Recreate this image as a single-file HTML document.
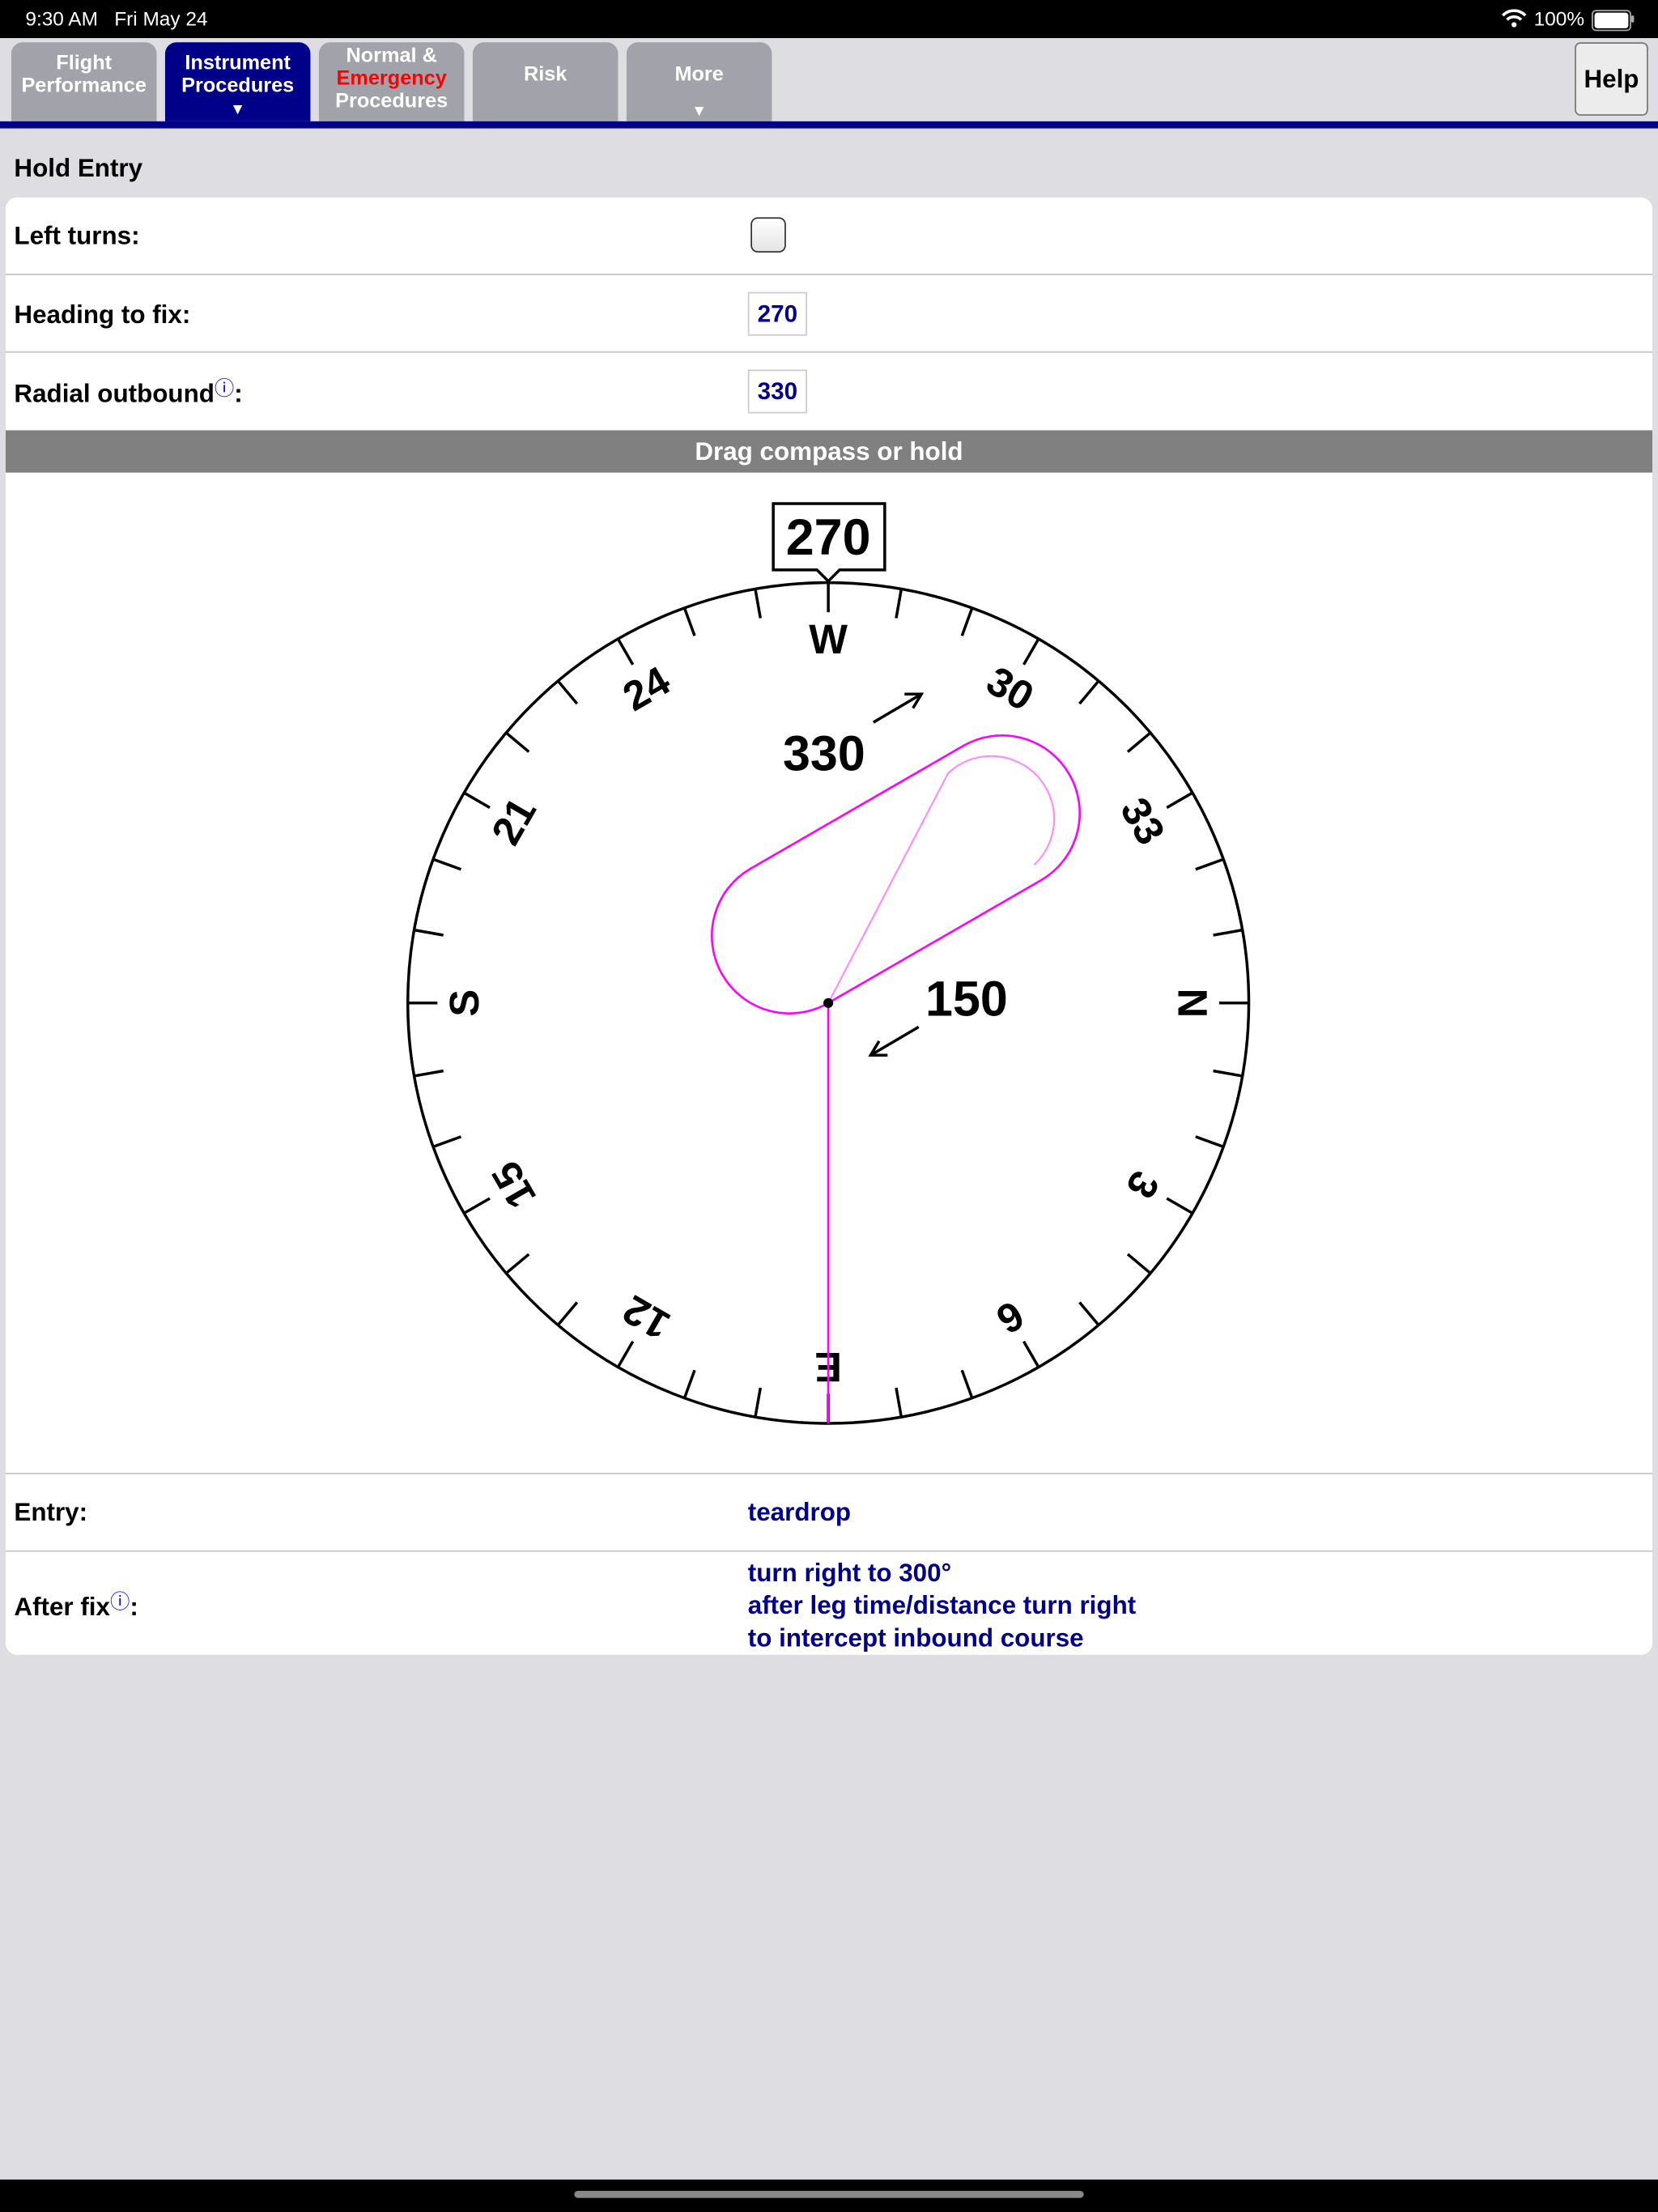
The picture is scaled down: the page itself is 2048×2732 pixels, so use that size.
<!DOCTYPE html>
<html><head><meta charset="utf-8"><style>
html,body{margin:0;padding:0;width:2048px;height:2732px;overflow:hidden;background:#dddde2;}
#w{position:absolute;left:0;top:0;width:1175px;height:1568px;transform:scale(1.74298,1.74234);transform-origin:0 0;font-family:"Liberation Sans",Arial,sans-serif;background:#dddde2;}
.abs{position:absolute;}
.tab{position:absolute;top:30px;width:103px;height:56px;background:#a2a2aa;border-radius:8px 8px 0 0;color:#fff;font-weight:bold;font-size:14.5px;text-align:center;line-height:16px;}
.lbl{position:absolute;left:10px;font-size:18px;font-weight:bold;color:#000;}
.val{position:absolute;left:530px;font-size:18px;font-weight:bold;color:#00008b;}
.inp{position:absolute;left:530px;width:40px;height:29px;border:1px solid #ccc;font-size:17px;font-weight:bold;color:#00008b;text-align:center;line-height:29px;background:#fff;}
.sep{position:absolute;left:4px;width:1167px;height:1px;background:#c4c4c4;}
</style></head><body><div id="w">
<div class="abs" style="left:0;top:0;width:1175px;height:27px;background:#000;"></div>
<div class="abs" style="left:18px;top:5px;color:#fff;font-size:14px;">9:30 AM&nbsp;&nbsp;&nbsp;Fri May 24</div>
<svg class="abs" style="left:1064px;top:6px" width="18" height="14" viewBox="0 0 18 14"><path d="M1 5 A11 11 0 0 1 17 5" stroke="#fff" stroke-width="2" fill="none"/><path d="M4 8 A7 7 0 0 1 14 8" stroke="#fff" stroke-width="2" fill="none"/><circle cx="9" cy="11.5" r="1.8" fill="#fff"/></svg>
<div class="abs" style="left:1087px;top:5px;color:#fff;font-size:14px;">100%</div>
<div class="abs" style="left:1128px;top:7px;width:24px;height:11px;border:1px solid #aaa;border-radius:3px;padding:1px;"><div style="width:24px;height:11px;background:#fff;border-radius:2px"></div></div>
<div class="abs" style="left:1156px;top:11px;width:2px;height:5px;background:#aaa;border-radius:1px"></div>

<div class="tab" style="left:8px;"><div style="margin-top:7px">Flight<br>Performance</div></div>
<div class="tab" style="left:117px;background:#000088;"><div style="margin-top:7px">Instrument<br>Procedures<br><span style="font-size:11px">▼</span></div></div>
<div class="tab" style="left:226px;"><div style="margin-top:2px">Normal &amp;<br><span style="color:#f00">Emergency</span><br>Procedures</div></div>
<div class="tab" style="left:335px;"><div style="margin-top:15px">Risk</div></div>
<div class="tab" style="left:444px;"><div style="margin-top:15px">More</div><div style="position:absolute;left:0;width:103px;top:41px;font-size:11px">▼</div></div>
<div class="abs" style="left:0;top:86px;width:1175px;height:5px;background:#000088;"></div>
<div class="abs" style="left:1116px;top:30px;width:50px;height:50px;background:#ececec;border:1px solid #777;border-radius:4px;font-size:18px;font-weight:bold;text-align:center;line-height:50px;">Help</div>

<div class="abs" style="left:10px;top:109px;font-size:18px;font-weight:bold;">Hold Entry</div>
<div class="abs" style="left:4px;top:140px;width:1167px;height:1033px;background:#fff;border-radius:8px;"></div>
<div class="lbl" style="top:157px">Left turns:</div>
<div class="abs" style="left:532px;top:154px;width:23px;height:23px;border:1.5px solid #333;border-radius:5px;background:linear-gradient(#fff,#e4e4e4);"></div>
<div class="sep" style="top:194px"></div>
<div class="lbl" style="top:213px">Heading to fix:</div>
<div class="inp" style="top:207px">270</div>
<div class="sep" style="top:249px"></div>
<div class="lbl" style="top:269px">Radial outbound<span style="color:#00f;font-weight:normal;font-size:14px;vertical-align:top;position:relative;top:-4px">ⓘ</span>:</div>
<div class="inp" style="top:262px">330</div>
<div class="abs" style="left:4px;top:305px;width:1167px;height:30px;background:#808080;color:#fff;font-size:18px;font-weight:bold;text-align:center;line-height:30px;">Drag compass or hold</div>

<svg class="abs" style="left:0;top:0" width="1175" height="1100" viewBox="0 0 1175 1100">
<defs><line id="t" x1="587" y1="413" x2="587" y2="434" stroke="#000" stroke-width="2"/></defs>
<circle cx="587" cy="711" r="298" fill="none" stroke="#000" stroke-width="2"/>
<g>
<use href="#t"/><use href="#t" transform="rotate(10 587 711)"/><use href="#t" transform="rotate(20 587 711)"/><use href="#t" transform="rotate(30 587 711)"/><use href="#t" transform="rotate(40 587 711)"/><use href="#t" transform="rotate(50 587 711)"/><use href="#t" transform="rotate(60 587 711)"/><use href="#t" transform="rotate(70 587 711)"/><use href="#t" transform="rotate(80 587 711)"/><use href="#t" transform="rotate(90 587 711)"/><use href="#t" transform="rotate(100 587 711)"/><use href="#t" transform="rotate(110 587 711)"/><use href="#t" transform="rotate(120 587 711)"/><use href="#t" transform="rotate(130 587 711)"/><use href="#t" transform="rotate(140 587 711)"/><use href="#t" transform="rotate(150 587 711)"/><use href="#t" transform="rotate(160 587 711)"/><use href="#t" transform="rotate(170 587 711)"/><use href="#t" transform="rotate(180 587 711)"/><use href="#t" transform="rotate(190 587 711)"/><use href="#t" transform="rotate(200 587 711)"/><use href="#t" transform="rotate(210 587 711)"/><use href="#t" transform="rotate(220 587 711)"/><use href="#t" transform="rotate(230 587 711)"/><use href="#t" transform="rotate(240 587 711)"/><use href="#t" transform="rotate(250 587 711)"/><use href="#t" transform="rotate(260 587 711)"/><use href="#t" transform="rotate(270 587 711)"/><use href="#t" transform="rotate(280 587 711)"/><use href="#t" transform="rotate(290 587 711)"/><use href="#t" transform="rotate(300 587 711)"/><use href="#t" transform="rotate(310 587 711)"/><use href="#t" transform="rotate(320 587 711)"/><use href="#t" transform="rotate(330 587 711)"/><use href="#t" transform="rotate(340 587 711)"/><use href="#t" transform="rotate(350 587 711)"/>
</g>
<g font-family="Liberation Sans, Arial, sans-serif" font-weight="bold" font-size="29" text-anchor="middle" dominant-baseline="central" fill="#000">
<text transform="translate(587,453) rotate(0)">W</text>
<text transform="translate(716,488) rotate(30)">30</text>
<text transform="translate(810,582) rotate(60)">33</text>
<text transform="translate(845,711) rotate(90)">N</text>
<text transform="translate(810,840) rotate(120)">3</text>
<text transform="translate(716,934) rotate(150)">6</text>
<text transform="translate(587,969) rotate(180)">E</text>
<text transform="translate(458,934) rotate(210)">12</text>
<text transform="translate(364,840) rotate(240)">15</text>
<text transform="translate(329,711) rotate(270)">S</text>
<text transform="translate(364,582) rotate(300)">21</text>
<text transform="translate(458,488) rotate(330)">24</text>
</g>
<path d="M548 357 H627 V404 H595 L587 412 L579 404 H548 Z" fill="#fff" stroke="#000" stroke-width="2"/>
<text x="587" y="381" font-family="Liberation Sans, Arial, sans-serif" font-weight="bold" font-size="36" text-anchor="middle" dominant-baseline="central">270</text>
<line x1="587" y1="711" x2="587" y2="1009" stroke="#f0f" stroke-width="1.5"/>
<path d="M587 711 L737.7 624 A55 55 0 0 0 682.7 528.7 L532 615.7 A55 55 0 0 0 587 711 Z" fill="none" stroke="#f0f" stroke-width="1.5"/>
<path d="M587 711 L672 548 A44 44 0 1 1 733 613" fill="none" stroke="#f8f" stroke-width="1.2"/>
<circle cx="587" cy="711" r="3.5" fill="#000"/>
<g font-family="Liberation Sans, Arial, sans-serif" font-weight="bold" font-size="35" text-anchor="middle" dominant-baseline="central">
<text x="584" y="534">330</text>
<text x="685" y="708">150</text>
</g>
<g stroke="#000" stroke-width="2" fill="none">
<path d="M619 512 L653 492 M641 492 L653 492 L647 502"/>
<path d="M651 728 L617 748 M629 748 L617 748 L623 738"/>
</g>
</svg>

<div class="sep" style="top:1044px"></div>
<div class="lbl" style="top:1062px">Entry:</div>
<div class="val" style="top:1062px">teardrop</div>
<div class="sep" style="top:1099px"></div>
<div class="lbl" style="top:1129px">After fix<span style="color:#00f;font-weight:normal;font-size:14px;vertical-align:top;position:relative;top:-4px">ⓘ</span>:</div>
<div class="val" style="top:1104px;line-height:23px">turn right to 300°<br>after leg time/distance turn right<br>to intercept inbound course</div>

<div class="abs" style="left:0;top:1545px;width:1175px;height:23px;background:#000;"></div>
<div class="abs" style="left:407px;top:1553px;width:361px;height:5px;background:#888;border-radius:3px;"></div>
</div></body></html>
